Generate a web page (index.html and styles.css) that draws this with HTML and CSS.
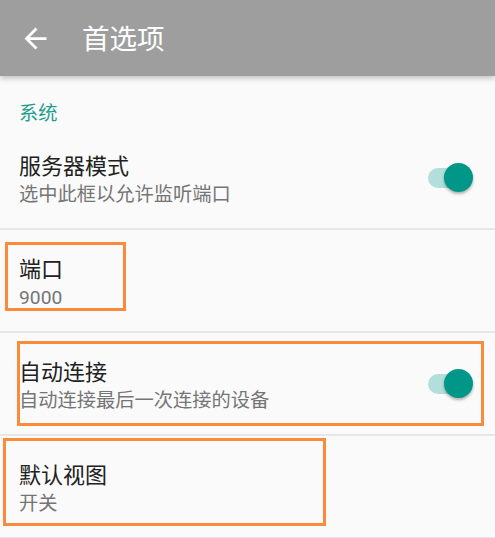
FILE: index.html
```html
<!DOCTYPE html>
<html lang="zh-CN">
<head>
<meta charset="utf-8">
<title>首选项</title>
<link rel="stylesheet" href="styles.css">
</head>
<body>
<header class="appbar">
  <svg class="back" viewBox="0 0 24 24" width="33" height="33"><path fill="#fff" d="M20 11H7.83l5.59-5.59L12 4l-8 8 8 8 1.41-1.41L7.83 13H20v-2z"/></svg>
  <h1 class="appbar-title">首选项</h1>
</header>
<main class="prefs">
  <div class="category">系统</div>
  <div class="row">
    <div class="texts">
      <div class="title">服务器模式</div>
      <div class="summary">选中此框以允许监听端口</div>
    </div>
    <div class="switch"><span class="track"></span><span class="thumb"></span></div>
  </div>
  <div class="row">
    <div class="texts">
      <div class="title">端口</div>
      <div class="summary">9000</div>
    </div>
    <span class="mark mark-port"></span>
  </div>
  <div class="row">
    <div class="texts">
      <div class="title">自动连接</div>
      <div class="summary">自动连接最后一次连接的设备</div>
    </div>
    <div class="switch"><span class="track"></span><span class="thumb"></span></div>
    <span class="mark mark-auto"></span>
  </div>
  <div class="row">
    <div class="texts">
      <div class="title">默认视图</div>
      <div class="summary">开关</div>
    </div>
    <span class="mark mark-view"></span>
  </div>
</main>
</body>
</html>
```
FILE: styles.css
```css
* { box-sizing: border-box; }
html, body {
  margin: 0;
  padding: 0;
  background: #fafafa;
  font-family: Roboto, "Noto Sans CJK SC", "Noto Sans", sans-serif;
  width: 495px;
  height: 538px;
  overflow: hidden;
}
.appbar {
  height: 76px;
  background: #9e9e9e;
  display: flex;
  align-items: center;
  padding-left: 19px;
  position: relative;
  z-index: 2;
  box-shadow: 0 2px 6px rgba(0,0,0,0.25);
}
.back { display: block; flex: none; }
.appbar-title {
  margin: 0 0 0 30px;
  font-size: 27.5px;
  font-weight: 400;
  color: #fff;
  line-height: 34px;
  padding-top: 3px;
}
.category {
  height: 51px;
  padding: 25px 0 0 19px;
  font-size: 19.25px;
  line-height: 26px;
  color: #1e9e8c;
}
.row {
  position: relative;
  height: 103px;
  border-bottom: 2px solid #e6e6e6;
  display: flex;
  align-items: center;
  padding: 0 22px 0 19px;
}
.texts { flex: 1; padding-top: 6px; }
.title {
  font-size: 22px;
  line-height: 28px;
  color: #212121;
}
.summary {
  font-size: 19.25px;
  line-height: 28px;
  color: #757575;
}
.switch {
  position: relative;
  width: 45px;
  height: 29px;
  flex: none;
}
.track {
  position: absolute;
  left: 0;
  top: 4.5px;
  width: 44px;
  height: 20px;
  border-radius: 10px;
  background: #b2dfdb;
}
.thumb {
  position: absolute;
  right: 0;
  top: 0;
  width: 29px;
  height: 29px;
  border-radius: 50%;
  background: #009688;
  box-shadow: 0 2px 3px rgba(0,0,0,0.3);
}
.mark {
  position: absolute;
  border: 3px solid #f98b3a;
}
.mark-port { left: 5px; top: 12px; width: 121px; height: 69px; }
.mark-auto { left: 17px; top: 8px; width: 467px; height: 85px; }
.mark-view { left: 3px; top: 2px; width: 323px; height: 88px; }
```
